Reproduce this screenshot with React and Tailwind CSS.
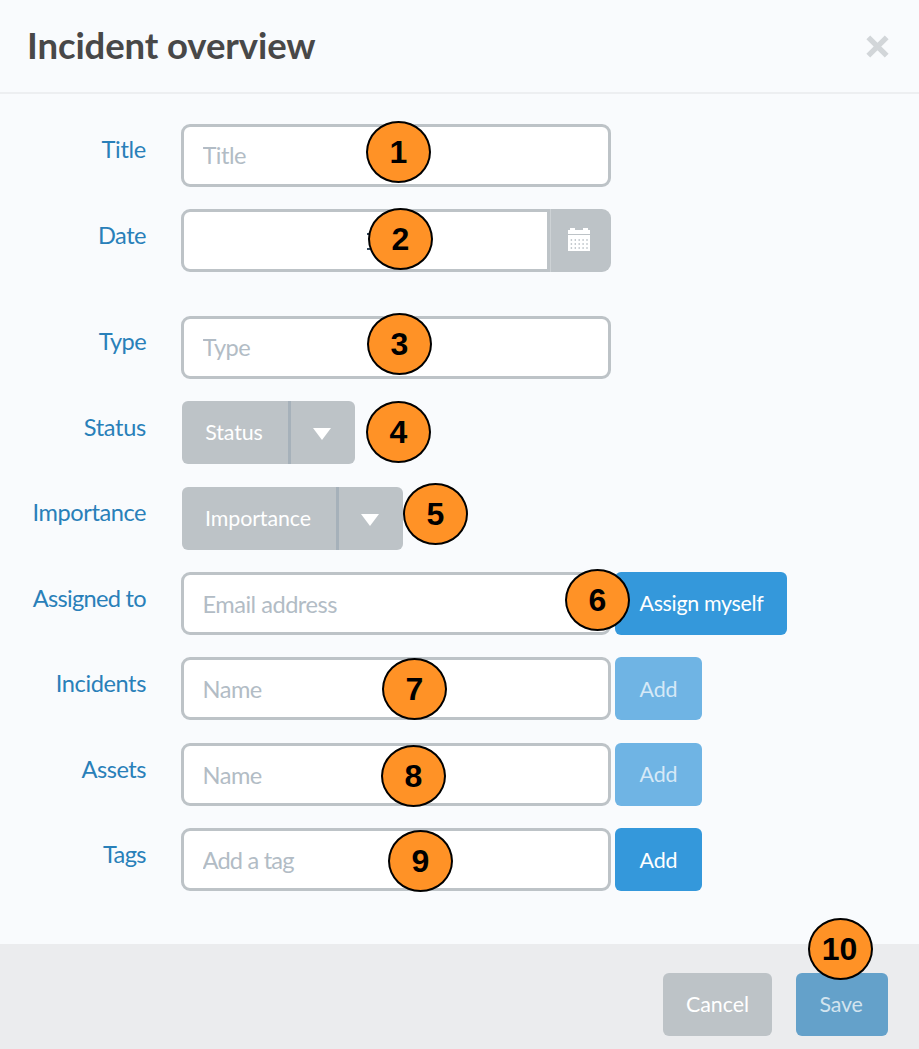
const Badge = ({ n, className }) => (
  <span
    className={`absolute z-10 flex h-[62px] w-[65px] items-center justify-center rounded-[50%] border-2 border-black bg-[#ff9226] font-['Liberation_Sans',Arial,sans-serif] text-[32px] leading-none font-bold text-black ${className}`}
  >
    {n}
  </span>
);

const Row = ({ label, className = 'h-[85px]', labelClassName = 'pt-[11px] tracking-[-0.5px]', children }) => (
  <div className={`relative flex items-start ${className}`}>
    <label className={`w-[146px] shrink-0 text-right text-[23.6px] leading-[30px] text-[#2980b9] ${labelClassName}`}>
      {label}
    </label>
    <div className="ml-[35px] flex">{children}</div>
  </div>
);

const Input = ({ placeholder = '', className = 'w-[430px] rounded-[9px]' }) => (
  <input
    type="text"
    placeholder={placeholder}
    className={`h-[63px] border-[3px] border-[#bdc3c7] bg-white pl-[18.5px] text-[23.6px] tracking-[-0.5px] text-[#34495e] outline-none placeholder:text-[#b2bcc5] placeholder:opacity-100 ${className}`}
  />
);

const Button = ({ children, className }) => (
  <button type="button" className={`flex h-[63px] shrink-0 items-center justify-center rounded-[6px] text-[21.4px] leading-none ${className}`}>
    {children}
  </button>
);

const Split = ({ children, className }) => (
  <div className="ml-px flex h-[63px] overflow-hidden rounded-[6px] bg-[#bdc3c7] text-white">
    <button type="button" className={`flex items-center justify-center pr-[2px] text-[21.4px] leading-none tracking-[-0.1px] ${className}`}>
      {children}
    </button>
    <button type="button" className="flex w-[67px] items-center justify-center border-l-[3px] border-[#a6b1ba] pt-[2px] pr-[2px]">
      <svg width="18" height="12" viewBox="0 0 18 12" fill="#fff">
        <path d="M0 0h18L9 12z" />
      </svg>
    </button>
  </div>
);

const dots = [0, 1, 2].flatMap((r) => [0, 1, 2, 3, 4].map((c) => [c, r]));

const Calendar = () => (
  <svg width="22" height="24" viewBox="0 0 22 24">
    <path d="M0 3h2V1h5v2h8V1h5v2h2v4H0z" fill="#fff" />
    <path d="M0 8h22v16H0z" fill="#fff" />
    {dots.map(([c, r]) => (
      <rect key={`${c}-${r}`} x={2.7 + c * 3.9} y={12.3 + r * 4} width="1.4" height="1.4" fill="#aeb6bc" />
    ))}
  </svg>
);

export default function App() {
  return (
    <div className="flex h-[1049px] w-[919px] flex-col overflow-hidden bg-[#f9fbfd] font-[Lato,sans-serif]">
      <header className="flex h-[94px] shrink-0 items-center justify-between border-b-2 border-[#edeff1] pr-[30px] pl-[27px]">
        <h1 className="pb-[2px] text-[36.5px] leading-none font-bold tracking-[-0.1px] text-[#484848]">Incident overview</h1>
        <button type="button" aria-label="Close">
          <svg width="23" height="23" viewBox="0 0 23 23" stroke="#d2d6d9" strokeWidth="5.4">
            <path d="M2.3 2.3l18.4 18.4M20.7 2.3L2.3 20.7" />
          </svg>
        </button>
      </header>

      <main className="flex h-[850px] shrink-0 flex-col pt-[30px]">
        <Row label="Title" labelClassName="pt-[10px] tracking-[-0.3px]">
          <Input placeholder="Title" className="w-[430px] rounded-[9px] pb-[2px]" />
          <Badge n="1" className="top-[-3px] left-[366px]" />
        </Row>
        <Row label="Date" className="h-[107px]">
          <span className="absolute top-[24px] left-[367px] z-[1] h-[17px] w-[3px] border-y-2 border-[#34495e]" />
          <Input className="w-[369px] rounded-l-[9px]" />
          <button type="button" aria-label="Pick a date" className="flex h-[63px] w-[61px] items-center justify-center rounded-r-[9px] border-l border-[#cdd2d5] bg-[#bdc3c7] pr-[4px] pb-[3px]">
            <Calendar />
          </button>
          <Badge n="2" className="top-[-1px] left-[368px]" />
        </Row>
        <Row label="Type" labelClassName="pt-[10px] tracking-[-0.6px]">
          <Input placeholder="Type" className="w-[430px] rounded-[9px] pb-[2px]" />
          <Badge n="3" className="top-[-3px] left-[367px]" />
        </Row>
        <Row label="Status" className="h-[86px]" labelClassName="pt-[11px] tracking-[-0.3px]">
          <Split className="w-[106px]">Status</Split>
          <Badge n="4" className="top-0 left-[366px]" />
        </Row>
        <Row label="Importance" labelClassName="pt-[10px] tracking-[-0.45px]">
          <Split className="w-[154px]">Importance</Split>
          <Badge n="5" className="top-[-4px] left-[403px]" />
        </Row>
        <Row label="Assigned to" labelClassName="pt-[11px] tracking-[-0.7px]">
          <Input placeholder="Email address" />
          <Button className="ml-[4px] w-[172px] bg-[#3498db] pl-px tracking-[-0.3px] text-white">Assign myself</Button>
          <Badge n="6" className="top-[-3px] left-[565px]" />
        </Row>
        <Row label="Incidents" className="h-[86px]" labelClassName="pt-[11px] tracking-[-0.4px]">
          <Input placeholder="Name" />
          <Button className="ml-[4px] w-[87px] bg-[#6fb4e4] pt-[2px] text-[#d6e9f7]">Add</Button>
          <Badge n="7" className="top-px left-[382px]" />
        </Row>
        <Row label="Assets">
          <Input placeholder="Name" />
          <Button className="ml-[4px] w-[87px] bg-[#6fb4e4] text-[#d6e9f7]">Add</Button>
          <Badge n="8" className="top-[2px] left-[381px]" />
        </Row>
        <Row label="Tags" labelClassName="pt-[11px] tracking-[-0.6px]">
          <Input placeholder="Add a tag" className="w-[430px] rounded-[9px] placeholder:tracking-[-0.8px]" />
          <Button className="ml-[4px] w-[87px] bg-[#3498db] pt-[2px] text-white">Add</Button>
          <Badge n="9" className="top-[2px] left-[388px]" />
        </Row>
      </main>

      <footer className="relative flex flex-1 items-start justify-end gap-[24px] bg-[#ebecee] pt-[29px] pr-[31px]">
        <Button className="w-[109px] bg-[#bdc3c7] text-white">Cancel</Button>
        <Button className="w-[92px] bg-[#64a1ca] pr-[2px] tracking-[-0.2px] text-[#d3e4ef]">Save</Button>
        <Badge n="10" className="top-[-26px] left-[808px] pr-[2px]" />
      </footer>
    </div>
  );
}
